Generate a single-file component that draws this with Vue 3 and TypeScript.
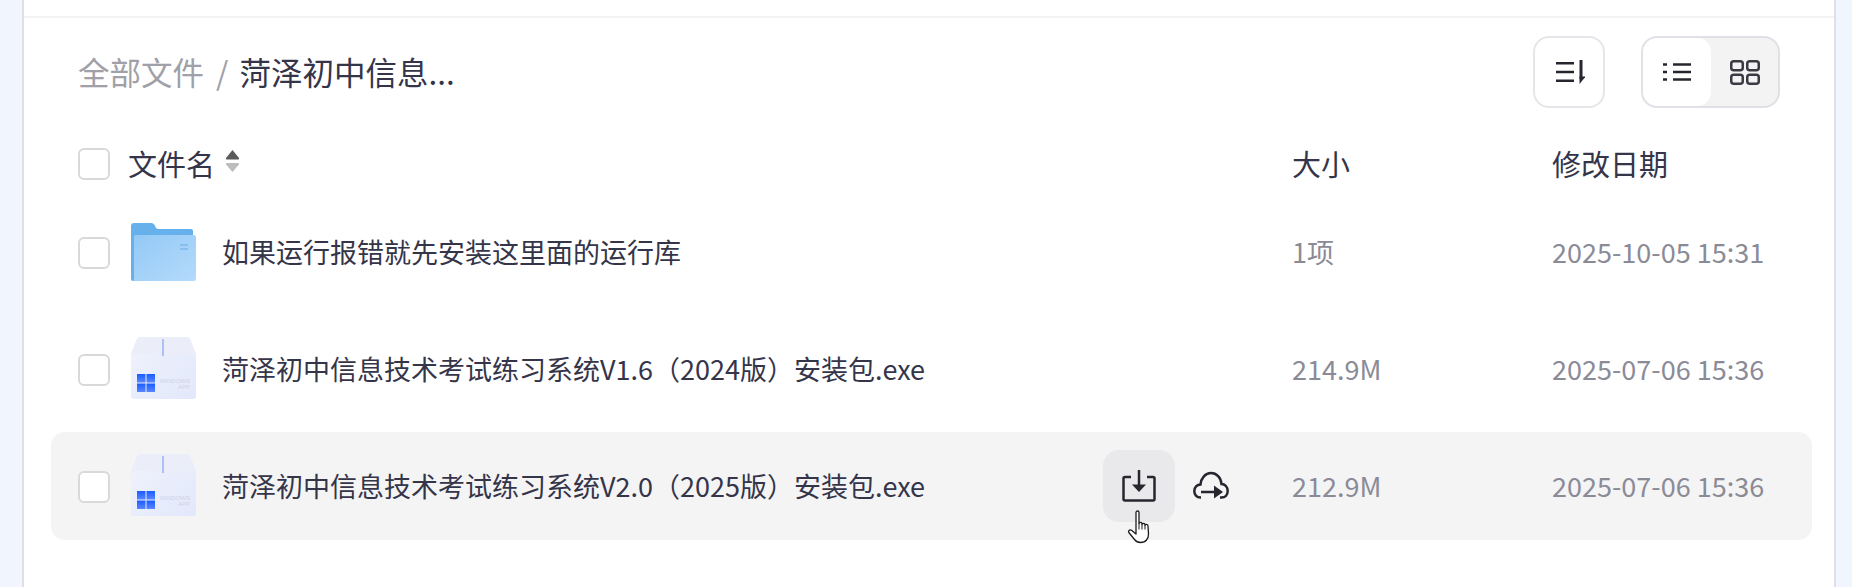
<script setup lang="ts">
interface FileRow {
  name: string
  kind: 'folder' | 'exe'
  size: string
  date: string
  hover?: boolean
}

const files: FileRow[] = [
  { name: '如果运行报错就先安装这里面的运行库', kind: 'folder', size: '1项', date: '2025-10-05 15:31' },
  { name: '菏泽初中信息技术考试练习系统V1.6（2024版）安装包.exe', kind: 'exe', size: '214.9M', date: '2025-07-06 15:36' },
  { name: '菏泽初中信息技术考试练习系统V2.0（2025版）安装包.exe', kind: 'exe', size: '212.9M', date: '2025-07-06 15:36', hover: true }
]
</script>

<template>
  <div class="page">
    <div class="panel">
      <div class="top-strip"></div>

      <div class="toolbar">
        <div class="crumbs">
          <span class="crumb-root">全部文件</span>
          <span class="crumb-sep">/</span>
          <span class="crumb-current">菏泽初中信息...</span>
        </div>
        <div class="tools">
          <button class="sort-btn">
            <svg width="32" height="24" viewBox="0 0 32 24" fill="none" stroke="#26262e" stroke-width="2.400">
              <path d="M3 3.200h18M3 12h18M3 20.800h18" />
              <path d="M28 0v19" stroke-width="3" />
              <path d="M26.500 24v-7.500h6z" fill="#26262e" stroke="none" />
            </svg>
          </button>
          <div class="view-toggle">
            <div class="view-opt active">
              <svg width="28" height="18" viewBox="0 0 28 18" fill="none" stroke="#26262e" stroke-width="2.400">
                <path d="M0 1.500h4M10 1.500h18M0 9h4M10 9h18M0 16.500h4M10 16.500h18" />
              </svg>
            </div>
            <div class="view-opt">
              <svg width="30" height="25" viewBox="0 0 30 25" fill="none" stroke="#3a3a42" stroke-width="2.500">
                <rect x="1.250" y="1.250" width="11.500" height="9" rx="2.500" />
                <rect x="17.250" y="1.250" width="11.500" height="9" rx="2.500" />
                <rect x="1.250" y="14.750" width="11.500" height="9" rx="2.500" />
                <rect x="17.250" y="14.750" width="11.500" height="9" rx="2.500" />
              </svg>
            </div>
          </div>
        </div>
      </div>

      <div class="head-row">
        <span class="check"></span>
        <div class="head-name">
          <span class="head-label">文件名</span>
          <svg class="sort-arrows" width="15" height="24" viewBox="0 0 15 24">
            <path d="M7.500 1 L14 9 Q14.500 10.500 13 10.500 L2 10.500 Q.5 10.500 1 9 Z" fill="#5b5b5b" />
            <path d="M2 14 L13 14 Q14.500 14 14 15.500 L7.500 23 L1 15.500 Q.5 14 2 14 Z" fill="#bdbdbd" />
          </svg>
        </div>
        <span class="col-size head-label">大小</span>
        <span class="col-date head-label">修改日期</span>
      </div>

      <div class="list">
        <div v-for="file in files" :key="file.name" class="row" :class="{ hover: file.hover }">
          <span class="check"></span>

          <svg v-if="file.kind === 'folder'" class="file-icon" width="67" height="60" viewBox="0 0 67 60">
            <defs>
              <linearGradient id="folderFront" x1="0" y1="0" x2="1" y2="1">
                <stop offset="0" stop-color="#93c9f6" />
                <stop offset="1" stop-color="#b4dafb" />
              </linearGradient>
            </defs>
            <path d="M1 4 Q1 1 4 1 H21 Q24 1 25 4 L26 6 Q27 7 29 7 H61 Q63 7 63 9 V59 H3 Q1 59 1 57 Z" fill="#66b1ec" />
            <path d="M4 15 Q4 13 6 13 H64 Q66 13 66 15 V57 Q66 59 64 59 H3 Q4 59 4 57 Z" fill="url(#folderFront)" />
            <path d="M50 23h8M50 27h8" stroke="#7db8ea" stroke-width="1.500" />
          </svg>

          <svg v-else class="file-icon box" width="67" height="64" viewBox="0 0 67 64">
            <defs>
              <linearGradient id="boxBody" x1="0" y1="0" x2="1" y2="1">
                <stop offset="0" stop-color="#f0f3fc" />
                <stop offset="1" stop-color="#e2e8fb" />
              </linearGradient>
              <linearGradient id="winBlue" x1="0" y1="0" x2="0" y2="1">
                <stop offset="0" stop-color="#1a5cff" />
                <stop offset="1" stop-color="#5a86ff" />
              </linearGradient>
            </defs>
            <path d="M10 1 H57 Q59 1 60 3 L66 18 V60 Q66 63 63 63 H4 Q1 63 1 60 V18 L7 3 Q8 1 10 1 Z" fill="url(#boxBody)" />
            <path d="M1 18 H66 L60 3 Q59 1 57 1 H10 Q8 1 7 3 Z" fill="#ebeef9" />
            <rect x="32" y="3" width="2" height="17" fill="#a9c0f8" />
            <g fill="url(#winBlue)">
              <rect x="7" y="38" width="8.500" height="8.500" />
              <rect x="16.500" y="38" width="8.500" height="8.500" />
              <rect x="7" y="47.500" width="8.500" height="8.500" />
              <rect x="16.500" y="47.500" width="8.500" height="8.500" />
            </g>
            <text x="60" y="47" text-anchor="end" class="box-label">WINDOWS</text>
            <text x="60" y="53" text-anchor="end" class="box-label">APP</text>
          </svg>

          <span class="file-name">{{ file.name }}</span>

          <div v-if="file.hover" class="actions">
            <div class="action-btn hovered">
              <svg width="34" height="34" viewBox="0 0 34 34" fill="none" stroke="#26262e" stroke-width="2.500">
                <path d="M9 8H3Q1.500 8 1.500 9.500V30Q1.500 31.500 3 31.500H31Q32.500 31.500 32.500 30V9.500Q32.500 8 31 8H25" />
                <path d="M17 1v17" />
                <path d="M10 15.500h14L17 23z" fill="#26262e" stroke="none" />
              </svg>
              <svg class="hand" width="26" height="34" viewBox="0 0 26 34">
                <path d="M9 2.500c0-2 3-2 3 0v11c0-1.500 3-1.500 3 0v1c0-1.500 3-1.500 3 0v1c0-1.500 3-1.500 3 .5l.5 8c0 3-.5 4.500-2 6-1.500 2-3.500 2.500-6 2.500-3 0-4.500-1-6-3L1.800 22.500c-1-1.500 1-3.500 3-2l4.200 3.500z" fill="#fff" stroke="#1c1c1c" stroke-width="1.300" stroke-linejoin="round" />
                <path d="M12 13.500v6M15 14.500v5M18 15.500v4" stroke="#1c1c1c" stroke-width="1" fill="none" />
              </svg>
            </div>
            <div class="action-btn">
              <svg width="36" height="30" viewBox="0 0 36 30" fill="none" stroke="#26262e" stroke-width="2.500">
                <path d="M8 26.500H7.500C3.500 26.500 1.300 23.500 1.300 20S4 13.500 7.500 13.500C8 7 12.500 2 18 2S28 6.500 28.500 13C32 13 34.700 16 34.700 20S32 26.500 28.500 26.500H27" />
                <path d="M8 21h16" />
                <path d="M21 14.500l9 6.500-9 6.500z" fill="#26262e" stroke="none" />
              </svg>
            </div>
          </div>

          <span class="col-size muted">{{ file.size }}</span>
          <span class="col-date muted">{{ file.date }}</span>
        </div>
      </div>
    </div>
  </div>
</template>

<style scoped>
.page {
  height: 587px;
  background: #f1f5fe;
  padding: 0 16px 0 22px;
  box-sizing: border-box;
  overflow: hidden;
  font-family: "Noto Sans CJK SC", "Noto Sans", sans-serif;
  color: #35354a;
}

.panel {
  height: 100%;
  background: #fff;
  border-left: 2px solid #dfdfe5;
  border-right: 2px solid #dfdfe5;
}

.top-strip {
  height: 16px;
  border-bottom: 2px solid #f3f3f5;
}

.toolbar {
  display: flex;
  justify-content: space-between;
  align-items: center;
  height: 72px;
  margin-top: 18px;
  padding: 0 54px;
}

.crumbs {
  display: flex;
  align-items: center;
  font-size: 31.500px;
  line-height: 40px;
  margin-top: -2px;
}

.crumb-root {
  color: #a0a0a8;
}

.crumb-sep {
  color: #a0a0a8;
  margin: 0 11px 0 12px;
}

.crumb-current {
  color: #35354a;
}

.tools {
  display: flex;
  gap: 36px;
}

.sort-btn {
  width: 72px;
  height: 72px;
  padding: 0;
  background: #fff;
  border: 2px solid #e6e6ea;
  border-radius: 16px;
  display: flex;
  align-items: center;
  justify-content: center;
}

.view-toggle {
  width: 139px;
  height: 72px;
  box-sizing: border-box;
  display: flex;
  background: #f3f3f4;
  border: 2px solid #e0e0e6;
  border-radius: 16px;
  overflow: hidden;
}

.view-opt {
  width: 68px;
  display: flex;
  align-items: center;
  justify-content: center;
}

.view-opt.active {
  background: #fff;
  border-radius: 14px;
}

.view-opt:last-child {
  flex: 1;
}

.head-row,
.row {
  display: flex;
  align-items: center;
  margin: 0 22px 0 27px;
  padding-left: 27px;
  position: relative;
}

.head-row {
  height: 60px;
  margin-top: 26px;
  font-size: 29px;
}

.head-label {
  line-height: 40px;
  transform: translateY(-1px);
}

.head-name {
  display: flex;
  align-items: center;
  gap: 10px;
  margin-left: 18px;
}

.sort-arrows {
  margin-top: -6px;
}

.check {
  width: 32px;
  height: 32px;
  box-sizing: border-box;
  flex: none;
  background: #fff;
  border: 2px solid #d9d9d9;
  border-radius: 6px;
}

.row .check {
  margin-top: 2px;
}

.col-size {
  position: absolute;
  left: 1241px;
}

.col-date {
  position: absolute;
  left: 1501px;
}

.list {
  display: flex;
  flex-direction: column;
  gap: 9px;
  margin-top: 4px;
}

.row {
  height: 108px;
  border-radius: 14px;
  font-size: 27px;
}

.row.hover {
  background: #f4f4f5;
}

.file-icon {
  flex: none;
  margin-left: 20px;
}

.file-icon.box {
  margin-top: -3px;
}

.box-label {
  font-family: "Liberation Sans", sans-serif;
  font-size: 6px;
  fill: #cdd3e6;
}

.file-name {
  margin-left: 25px;
  margin-top: -2px;
  color: #35354a;
  white-space: nowrap;
}

.muted {
  color: #8b8b97;
  font-size: 27px;
  margin-top: -2px;
}

.actions {
  position: absolute;
  left: 1052px;
  top: 18px;
  display: flex;
  gap: 0;
}

.action-btn {
  width: 72px;
  height: 72px;
  border-radius: 16px;
  display: flex;
  align-items: center;
  justify-content: center;
  position: relative;
}

.action-btn.hovered {
  background: #e9e9ec;
}

.hand {
  position: absolute;
  left: 24px;
  top: 60px;
}
</style>
